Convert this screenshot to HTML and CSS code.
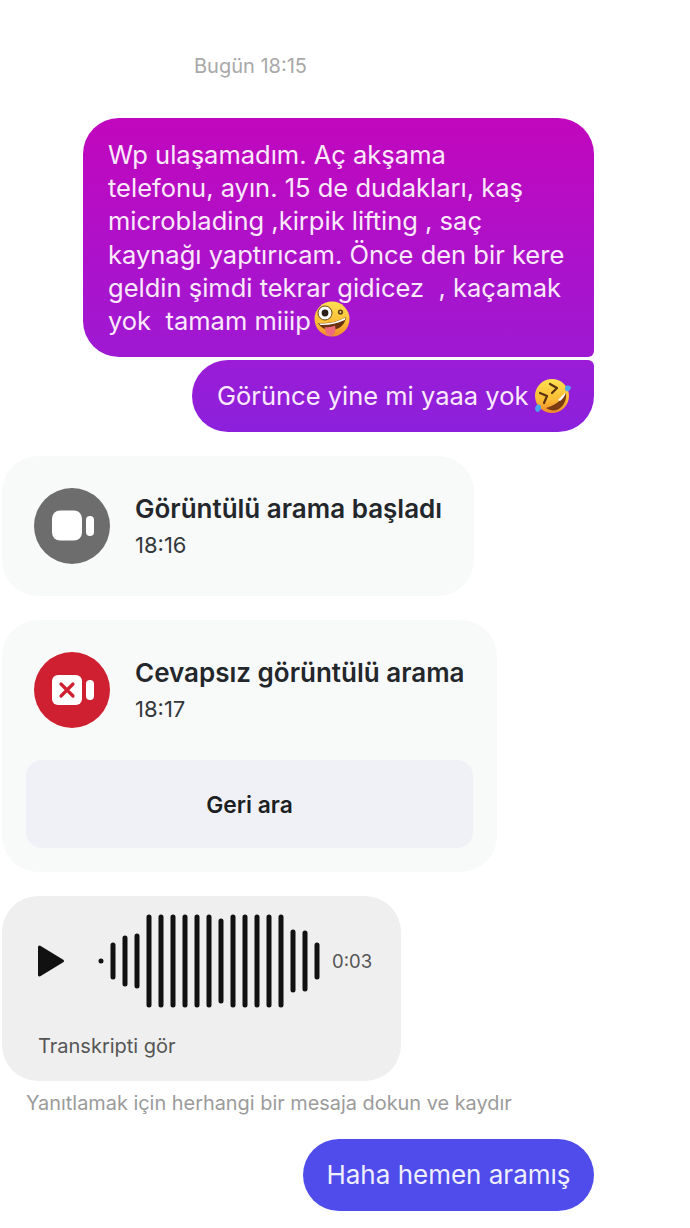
FILE: index.html
```html
<!DOCTYPE html>
<html lang="tr">
<head>
    <meta charset="UTF-8">
    <meta name="viewport" content="width=device-width, initial-scale=1.0">
    <title>Sohbet</title>
    <link rel="stylesheet" href="styles.css">
</head>
<body>
    <svg class="defs" width="0" height="0">
        <defs>
            <linearGradient id="face" x1="0" y1="0" x2="0" y2="1">
                <stop offset="0" stop-color="#ffe052"/>
                <stop offset="0.6" stop-color="#fbbd35"/>
                <stop offset="1" stop-color="#ee8a2c"/>
            </linearGradient>
        </defs>
    </svg>

    <main class="chat">
        <p class="stamp">Bugün 18:15</p>

        <div class="bubble bubble-first">Wp ulaşamadım. Aç akşama<br>telefonu, ayın. 15 de dudakları, kaş<br>microblading ,kirpik lifting , saç<br>kaynağı yaptırıcam. Önce den bir kere<br>geldin şimdi tekrar gidicez&nbsp; , kaçamak<br>yok&nbsp; tamam miiip<svg class="emoji emoji-zany" viewBox="0 0 36 36">
                <circle cx="18" cy="18" r="17.500" fill="url(#face)"/>
                <circle cx="11" cy="12" r="7" fill="#fff" stroke="#6b4414" stroke-width="1"/>
                <circle cx="11" cy="12" r="3.400" fill="#2b2118"/>
                <circle cx="26.500" cy="11" r="2.600" fill="#5a3a14"/>
                <circle cx="26.500" cy="11" r="1" fill="#fbe08a"/>
                <path d="M4 22c9 1 19-1 28-6-1 7-5 11-11 12.500-7 1.500-14-1-17-6.500z" fill="#6b3310"/>
                <path d="M5 22.200c9 .8 18-1 26.500-5.700l-.8 2.500c-8 3.800-17 5.500-24.200 5z" fill="#fff"/>
                <path d="M11 26c3 .5 7 0 10-1.500 1 4.500 .5 9.500-4 10.500-4.500 .5-6-4.500-6-9z" fill="#ee6b7c"/>
            </svg></div>

        <div class="bubble bubble-last">Görünce yine mi yaaa yok<svg class="emoji emoji-laugh" viewBox="0 0 38 36">
                <circle cx="19" cy="18" r="17" fill="url(#face)"/>
                <path d="M17 6l7 4-5 5M7 15l7 3-3 7" fill="none" stroke="#5a3210" stroke-width="2.200" stroke-linecap="round" stroke-linejoin="round"/>
                <path d="M33 15c1 8-3 14-9 17-4 1-8 0-11-2 8-2 16-8 20-15z" fill="#7a3a12"/>
                <path d="M32.500 15.500c-1 3-3 5.500-5.500 7.500l-2-1 7-7z" fill="#fff"/>
                <path d="M33 8c2-1 4 0 5 1-.5 3-2 5-5 4-1.500-1.500-1.500-3.500 0-5zM4 27c2-1 4 0 4 2s-1 5-4 5c-2.500-2-2.500-5 0-7z" fill="#4aa6e8"/>
            </svg></div>

        <section class="card call-started">
            <div class="call-row">
                <div class="call-icon call-icon-gray">
                    <svg width="48" height="36" viewBox="0 0 48 36">
                        <rect x="4" y="2.500" width="30" height="30" rx="8" fill="#fff"/>
                        <rect x="38" y="8" width="8" height="20" rx="4" fill="#fff"/>
                    </svg>
                </div>
                <div>
                    <h3 class="call-title">Görüntülü arama başladı</h3>
                    <p class="call-time">18:16</p>
                </div>
            </div>
        </section>

        <section class="card call-missed">
            <div class="call-row">
                <div class="call-icon call-icon-red">
                    <svg width="48" height="36" viewBox="0 0 48 36">
                        <rect x="4" y="3" width="30" height="30" rx="6" fill="#fff"/>
                        <path d="M13 12l12 12M25 12L13 24" stroke="#ce2030" stroke-width="3.200" stroke-linecap="round"/>
                        <rect x="38" y="8" width="8" height="20" rx="4" fill="#fff"/>
                    </svg>
                </div>
                <div>
                    <h3 class="call-title">Cevapsız görüntülü arama</h3>
                    <p class="call-time">18:17</p>
                </div>
            </div>
            <button class="call-back">Geri ara</button>
        </section>

        <section class="voice">
            <div class="voice-row">
                <svg class="play" width="28" height="34" viewBox="0 0 28 34">
                    <path d="M1.500 3L24.500 17 1.500 31z" fill="#111" stroke="#111" stroke-width="3" stroke-linejoin="round"/>
                </svg>
                <svg class="wave" width="226" height="98" viewBox="0 0 226 98">
                    <g stroke="#111" stroke-width="5" stroke-linecap="round">
                        <path d="M3 49v.1M15 33v32M27 26v46M39 24v50M51 5v88M63 5v88M75 5v88M87 5v88M99 5v88M111 5v88M123 9v80M135 5v88M147 5v88M159 5v88M171 5v88M183 5v88M195 20v58M207 21v56M219 33v32"/>
                    </g>
                </svg>
                <span class="voice-time">0:03</span>
            </div>
            <p class="transcript">Transkripti gör</p>
        </section>

        <p class="hint">Yanıtlamak için herhangi bir mesaja dokun ve kaydır</p>

        <div class="bubble bubble-blue">Haha hemen aramış</div>
    </main>
</body>
</html>
```

FILE: styles.css
```css
body {
    font-family: 'Inter', 'Liberation Sans', sans-serif;
    margin: 0;
    padding: 0;
    background-color: #fff;
}

.defs {
    display: block;
    height: 0;
}

.chat {
    display: flex;
    flex-direction: column;
    align-items: flex-start;
    padding: 55px 0 17px 2px;
}

p, h3 {
    margin: 0;
}

.stamp {
    margin-left: 192px;
    font-size: 20px;
    line-height: 23px;
    color: #a8a8a8;
}

.bubble {
    align-self: flex-end;
    margin-right: 96px;
    box-sizing: border-box;
    color: #fbe9fb;
    font-size: 25.500px;
    line-height: 33.200px;
    white-space: nowrap;
}

.bubble-first {
    width: 511px;
    height: 239px;
    margin-top: 40px;
    padding: 20px 20px 0 25px;
    border-radius: 36px 36px 6px 36px;
    background: linear-gradient(#c107bd, #9e19d3);
}

.bubble-last {
    display: flex;
    align-items: center;
    width: 402px;
    height: 72px;
    margin-top: 3px;
    padding-left: 25px;
    border-radius: 36px 6px 36px 36px;
    background: linear-gradient(#9b1cd6, #8b20dc);
}

.emoji {
    width: 36px;
    height: 36px;
    flex-shrink: 0;
}

.emoji-zany {
    margin: -8px 0 -8px 3px;
    vertical-align: 1px;
}

.emoji-laugh {
    width: 38px;
    margin-left: 5px;
}

.card {
    box-sizing: border-box;
    border-radius: 36px;
    background-color: #f8f9f9;
}

.call-started {
    width: 472px;
    height: 140px;
    margin-top: 24px;
    padding: 32px 0 0 32px;
}

.call-missed {
    width: 495px;
    height: 252px;
    margin-top: 24px;
    padding: 32px 24px 0 24px;
}

.call-missed .call-row {
    margin-left: 8px;
}

.call-row {
    display: flex;
    align-items: center;
    gap: 25px;
}

.call-icon {
    display: flex;
    align-items: center;
    justify-content: center;
    width: 76px;
    height: 76px;
    border-radius: 50%;
}

.call-icon-gray {
    background-color: #6d6d6d;
}

.call-icon-red {
    background-color: #ce2030;
}

.call-title {
    font-size: 26px;
    line-height: 36px;
    font-weight: 600;
    color: #23272b;
}

.call-time {
    margin-top: 1px;
    font-size: 22px;
    line-height: 34px;
    color: #33383c;
}

.call-back {
    display: block;
    width: 447px;
    height: 88px;
    margin-top: 32px;
    border: none;
    border-radius: 16px;
    background-color: #f0f1f6;
    color: #1b1e22;
    font-family: inherit;
    font-size: 22.800px;
    font-weight: 600;
}

.voice {
    box-sizing: border-box;
    width: 399px;
    height: 185px;
    margin-top: 24px;
    padding: 16px 0 0 36px;
    border-radius: 36px;
    background-color: #efefef;
}

.voice-row {
    display: flex;
    align-items: center;
    height: 98px;
}

.wave {
    margin-left: 32px;
}

.voice-time {
    margin-left: 8px;
    font-size: 18.500px;
    color: #555;
}

.transcript {
    margin: 23px 0 0 0;
    font-size: 20px;
    line-height: 26px;
    color: #555;
}

.hint {
    margin: 9px 0 0 24px;
    font-size: 19.900px;
    line-height: 26px;
    color: #9b9b9b;
}

.bubble-blue {
    display: flex;
    align-items: center;
    justify-content: center;
    width: 291px;
    height: 72px;
    margin-top: 23px;
    border-radius: 36px;
    background-color: #4f4ceb;
    color: #eeeefd;
    font-size: 26px;
}
```
